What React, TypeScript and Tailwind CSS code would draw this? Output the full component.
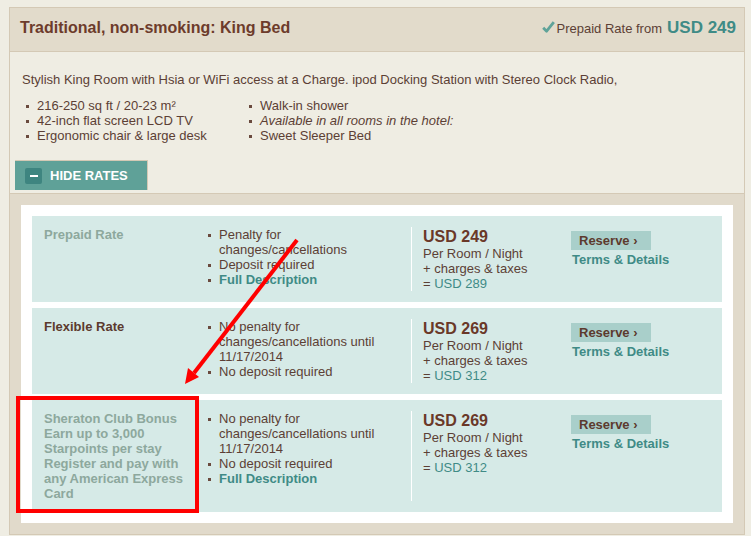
import React from "react";

// Room rate card with expanded rates list

type Rate = {
  name: string[];
  nameClass: string;
  bullets: { text: React.ReactNode; link?: boolean }[];
  price: string;
  total: string;
};

const rates: Rate[] = [
  {
    name: ["Prepaid Rate"],
    nameClass: "text-[#8da89d]",
    bullets: [
      { text: <>Penalty for<br />changes/cancellations</> },
      { text: "Deposit required" },
      { text: "Full Description", link: true },
    ],
    price: "USD 249",
    total: "USD 289",
  },
  {
    name: ["Flexible Rate"],
    nameClass: "text-[#5c3a2e]",
    bullets: [
      { text: <>No penalty for<br />changes/cancellations until<br />11/17/2014</> },
      { text: "No deposit required" },
    ],
    price: "USD 269",
    total: "USD 312",
  },
  {
    name: [
      "Sheraton Club Bonus",
      "Earn up to 3,000",
      "Starpoints per stay",
      "Register and pay with",
      "any American Express",
      "Card",
    ],
    nameClass: "text-[#8da89d]",
    bullets: [
      { text: <>No penalty for<br />changes/cancellations until<br />11/17/2014</> },
      { text: "No deposit required" },
      { text: "Full Description", link: true },
    ],
    price: "USD 269",
    total: "USD 312",
  },
];

function Dot() {
  return <span className="w-[3px] h-[3px] bg-[#6a4a3e] mt-[7px] mr-[8px] shrink-0" />;
}

function RateRow({ rate }: { rate: Rate }) {
  return (
    <div className="flex bg-[#d6eae7] pl-[12px] pt-[11px] pb-[11px] text-[13px] leading-[15px]">
      {/* Rate name */}
      <div className={`w-[164px] pr-[8px] font-bold ${rate.nameClass}`}>
        {rate.name.map((line) => (
          <div key={line}>{line}</div>
        ))}
      </div>

      {/* Conditions */}
      <ul className="w-[203px] pr-[6px] text-[#5c3f35]">
        {rate.bullets.map((b, i) => (
          <li key={i} className="flex">
            <Dot />
            <span className={b.link ? "font-bold text-[#3f8b86]" : ""}>{b.text}</span>
          </li>
        ))}
      </ul>

      {/* Price */}
      <div className="w-[160px] border-l border-white pl-[11px] text-[#5c3f35]">
        <div className="text-[16px] leading-[19px] font-bold text-[#6a3828]">{rate.price}</div>
        <div>Per Room / Night</div>
        <div>+ charges &amp; taxes</div>
        <div>
          = <span className="text-[#3f8b86]">{rate.total}</span>
        </div>
      </div>

      {/* Actions */}
      <div className="pt-[4px]">
        <button className="w-[80px] pl-[8px] py-[2px] text-left bg-[#a9cfca] font-bold text-[#5c3a2e] leading-[15px]">
          Reserve ›
        </button>
        <div className="mt-[2px] pl-[1px] font-bold text-[#3f8b86]">Terms &amp; Details</div>
      </div>
    </div>
  );
}

export default function App() {
  return (
    <div className="relative w-[751px] h-[536px] overflow-hidden bg-[#efede3] pt-[7px] pl-[9px] font-['Liberation_Sans',Arial,sans-serif]">
      <div className="w-[736px] border border-[#d4c9b5]">
        {/* Header */}
        <div className="h-[44px] bg-[#e2dbcb] border-b border-[#d4c9b5] flex justify-between px-[10px] pr-[8px]">
          <h1 className="pt-[10px] text-[16px] leading-[19px] font-bold text-[#6d3b2b]">
            Traditional, non-smoking: King Bed
          </h1>
          <div className="pt-[10px] flex items-baseline">
            <svg width="13" height="12" viewBox="0 0 13 12" className="mr-[2px]">
              <path d="M1.2 6.8 L4.6 10.2 L11.8 1.2" fill="none" stroke="#5fa399" strokeWidth="2.8" strokeLinejoin="round" />
            </svg>
            <span className="text-[13px] text-[#5c3f35]">Prepaid Rate from</span>
            <span className="ml-[5px] text-[17px] leading-[20px] font-bold text-[#3f8b86]">USD 249</span>
          </div>
        </div>

        {/* Room description */}
        <div className="pt-[20px] text-[13px] leading-[15px] text-[#5c3f35]">
          <p className="pl-[12px]">
            Stylish King Room with Hsia or WiFi access at a Charge. ipod Docking Station with Stereo Clock Radio,
          </p>
          <div className="flex mt-[11px] pl-[16px]">
            <ul className="w-[223px]">
              <li className="flex"><Dot />216-250 sq ft / 20-23 m²</li>
              <li className="flex"><Dot />42-inch flat screen LCD TV</li>
              <li className="flex"><Dot />Ergonomic chair &amp; large desk</li>
            </ul>
            <ul>
              <li className="flex"><Dot />Walk-in shower</li>
              <li className="flex"><Dot /><span className="italic">Available in all rooms in the hotel:</span></li>
              <li className="flex"><Dot />Sweet Sleeper Bed</li>
            </ul>
          </div>
          <div className="pl-[5px] mt-[17px] pb-[3px]">
            <button className="w-[133px] h-[30px] bg-[#5fa198] border-t border-r border-[#d4c9b5] flex items-center pl-[10px] gap-[8px]">
              <span className="w-[17px] h-[16px] rounded-[2px] bg-[#3e8580] flex items-center justify-center">
                <span className="w-[8px] h-[2px] bg-white" />
              </span>
              <span className="text-[13px] font-bold text-white">HIDE RATES</span>
            </button>
          </div>
        </div>

        {/* Rates list */}
        <div className="bg-[#e1dacb] border-t border-[#d4c9b5] px-[11px] pt-[11px] pb-[11px]">
          <div className="bg-white p-[11px] flex flex-col gap-[6px]">
            {rates.map((r, i) => (
              <RateRow key={i} rate={r} />
            ))}
          </div>
        </div>
      </div>

      {/* Annotation: arrow and highlight box */}
      <svg className="absolute left-0 top-0 pointer-events-none" width="751" height="536">
        <line x1="297" y1="240" x2="194" y2="373" stroke="#ff0000" strokeWidth="4" />
        <polygon points="185,384 199,377 188,368" fill="#ff0000" />
      </svg>
      <div className="absolute left-[16px] top-[396px] w-[183px] h-[117px] border-4 border-[#ff0000] pointer-events-none" />
    </div>
  );
}
